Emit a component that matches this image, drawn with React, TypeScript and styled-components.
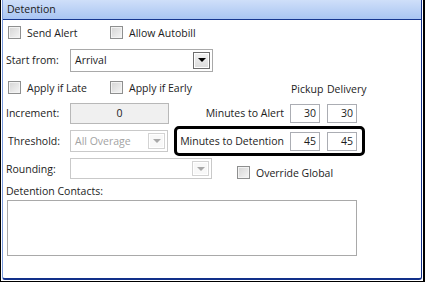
import styled, { createGlobalStyle } from "styled-components";

const GlobalStyle = createGlobalStyle`
  html, body { margin: 0; padding: 0; background: #fff; }
  body {
    font-family: "Open Sans", "Liberation Sans", sans-serif;
    font-size: 10.5px;
    color: #1c1c1c;
  }
  * { box-sizing: border-box; }
`;

const Frame = styled.div`
  width: 425px;
  height: 282px;
  display: flex;
  padding: 0 1px 1px 1px;
  border-left: 1px solid #000;
  border-right: 2px solid #000;
  border-bottom: 1px solid #000;
  background: #fff;
`;

const Panel = styled.div`
  flex: 1;
  min-width: 0;
  display: flex;
  flex-direction: column;
  border-left: 1px solid #7b9bdc;
  border-right: 1px solid #12308a;
  border-bottom: 2px solid #12308a;
  border-radius: 0 0 3px 3px;
`;

const Header = styled.div`
  height: 20px;
  line-height: 19px;
  padding-left: 4px;
  background: linear-gradient(#cfdff9, #a9c5f2);
  border-bottom: 1px solid #163790;
  color: #1a1a1a;
`;

const Body = styled.div`
  display: flex;
  flex-direction: column;
  padding: 0 56px 0 3px;
`;

const Row = styled.div<{ $h: number }>`
  height: ${({ $h }) => $h}px;
  display: flex;
  align-items: center;
`;

const CheckItem = styled.label<{ $w?: number }>`
  display: flex;
  flex-shrink: 0;
  align-items: center;
  gap: 6px;
  margin-left: 2px;
  width: ${({ $w }) => ($w ? `${$w}px` : "auto")};
  white-space: nowrap;
`;

const Box = styled.span`
  width: 13px;
  height: 13px;
  flex-shrink: 0;
  border: 1px solid #8e8f8f;
  background: linear-gradient(135deg, #d4d4d4, #f5f5f5);
  box-shadow: inset 0 0 0 1px #f3f3f3;
`;

const FieldLabel = styled.span<{ $indent?: number }>`
  width: 64px;
  flex-shrink: 0;
  padding-left: ${({ $indent }) => $indent ?? 0}px;
  white-space: nowrap;
`;

const Select = styled.div<{ $w: number; $h: number; $disabled?: boolean }>`
  width: ${({ $w }) => $w}px;
  height: ${({ $h }) => $h}px;
  flex-shrink: 0;
  display: flex;
  align-items: center;
  padding: 2px;
  border: 1px solid ${({ $disabled }) => ($disabled ? "#c9c9c9" : "#a9a9a9")};
  background: #fff;
  color: ${({ $disabled }) => ($disabled ? "#a3a3a3" : "#1c1c1c")};
`;

const SelectText = styled.span`
  flex: 1;
  padding-left: 2px;
  white-space: nowrap;
`;

const DropButton = styled.span<{ $disabled?: boolean }>`
  width: 17px;
  align-self: stretch;
  display: flex;
  align-items: center;
  justify-content: center;
  border: 1px solid ${({ $disabled }) => ($disabled ? "#d3d3d3" : "#6d6d6d")};
  background: ${({ $disabled }) =>
    $disabled ? "#f8f8f8" : "linear-gradient(#f2f2f2, #dcdcdc)"};
  box-shadow: inset 0 0 0 1px #fff;
`;

const Arrow = styled.span<{ $disabled?: boolean }>`
  width: 0;
  height: 0;
  border-left: 4px solid transparent;
  border-right: 4px solid transparent;
  border-top: 4px solid ${({ $disabled }) => ($disabled ? "#a8a8a8" : "#000")};
`;

const TextInput = styled.div<{ $w: number; $h: number; $gray?: boolean; $center?: boolean }>`
  width: ${({ $w }) => $w}px;
  height: ${({ $h }) => $h}px;
  flex-shrink: 0;
  display: flex;
  align-items: center;
  justify-content: ${({ $center }) => ($center ? "center" : "flex-end")};
  padding-right: ${({ $center }) => ($center ? 0 : 3)}px;
  border: 1px solid ${({ $gray }) => ($gray ? "#b8b8b8" : "#abadb3")};
  background: ${({ $gray }) => ($gray ? "#f0f0f0" : "#fff")};
`;

const RightPart = styled.div`
  margin-left: auto;
  display: flex;
  align-items: center;
  gap: 7px;
  padding-right: 8px;
`;

const ColHeads = styled(RightPart)`
  align-self: flex-end;
  padding-bottom: 4px;
`;

const ColHead = styled.span`
  width: 30px;
  margin-left: -1px;
  white-space: nowrap;
`;

const RowLabel = styled.span`
  margin-right: -1px;
  white-space: nowrap;
`;

const Highlight = styled.div`
  width: 191px;
  height: 30px;
  margin-left: auto;
  display: flex;
  align-items: center;
  justify-content: flex-end;
  gap: 7px;
  padding-right: 5px;
  border: 3px solid #000;
  border-radius: 5px;
`;

const OverrideItem = styled(CheckItem)`
  margin-left: 25px;
  margin-top: 8px;
`;

const ContactsLabel = styled.div`
  margin-top: 3px;
  line-height: 14px;
`;

const ContactsBox = styled.div`
  width: 350px;
  height: 56px;
  margin: 2px 0 0 1px;
  border: 1px solid #a9a9a9;
  background: #fff;
`;

function Check({ label, w }: { label: string; w?: number }) {
  return (
    <CheckItem $w={w}>
      <Box />
      {label}
    </CheckItem>
  );
}

export default function App() {
  return (
    <>
      <GlobalStyle />
      <Frame>
        <Panel>
          <Header>Detention</Header>
          <Body>
            <Row $h={25}>
              <Check label="Send Alert" w={100} />
              <Check label="Allow Autobill" />
            </Row>
            <Row $h={30}>
              <FieldLabel>Start from:</FieldLabel>
              <Select $w={143} $h={23}>
                <SelectText>Arrival</SelectText>
                <DropButton>
                  <Arrow />
                </DropButton>
              </Select>
            </Row>
            <Row $h={25}>
              <Check label="Apply if Late" w={100} />
              <Check label="Apply if Early" />
              <ColHeads>
                <ColHead>Pickup</ColHead>
                <ColHead>Delivery</ColHead>
              </ColHeads>
            </Row>
            <Row $h={26}>
              <FieldLabel>Increment:</FieldLabel>
              <TextInput $w={99} $h={21} $gray $center>
                0
              </TextInput>
              <RightPart>
                <RowLabel>Minutes to Alert</RowLabel>
                <TextInput $w={30} $h={19}>30</TextInput>
                <TextInput $w={30} $h={19}>30</TextInput>
              </RightPart>
            </Row>
            <Row $h={30}>
              <FieldLabel $indent={2}>Threshold:</FieldLabel>
              <Select $w={98} $h={22} $disabled>
                <SelectText>All Overage</SelectText>
                <DropButton $disabled>
                  <Arrow $disabled />
                </DropButton>
              </Select>
              <Highlight>
                <RowLabel>Minutes to Detention</RowLabel>
                <TextInput $w={30} $h={19}>45</TextInput>
                <TextInput $w={30} $h={19}>45</TextInput>
              </Highlight>
            </Row>
            <Row $h={25}>
              <FieldLabel>Rounding:</FieldLabel>
              <Select $w={142} $h={21} $disabled>
                <SelectText />
                <DropButton $disabled>
                  <Arrow $disabled />
                </DropButton>
              </Select>
              <OverrideItem>
                <Box />
                Override Global
              </OverrideItem>
            </Row>
            <ContactsLabel>Detention Contacts:</ContactsLabel>
            <ContactsBox />
          </Body>
        </Panel>
      </Frame>
    </>
  );
}
